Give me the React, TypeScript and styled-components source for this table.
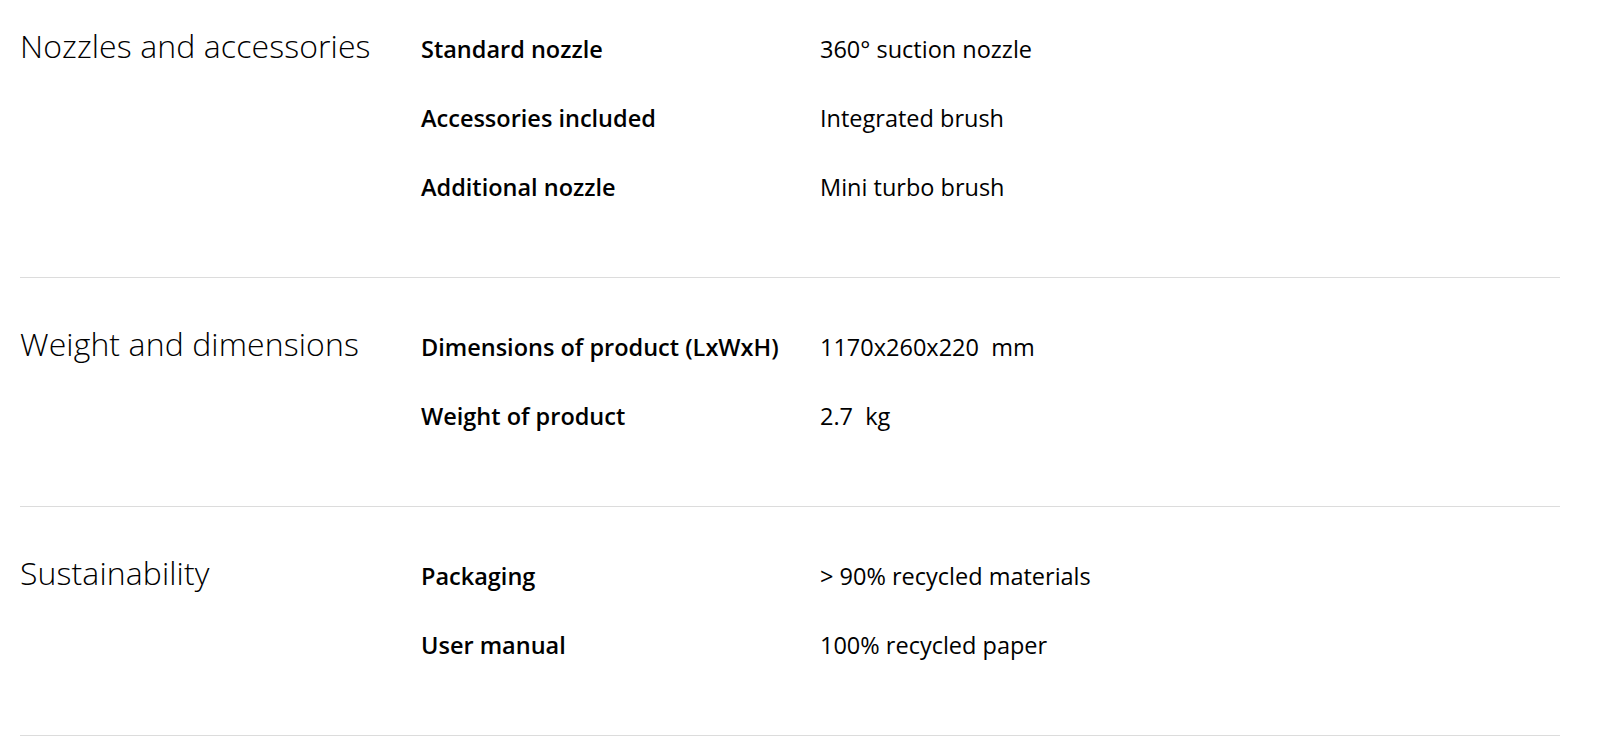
import React from "react";
import styled, { createGlobalStyle, css } from "styled-components";

interface Spec {
  label: string;
  value: string;
}

interface Group {
  title: string;
  specs: Spec[];
}

interface sectionProps {
  first?: boolean;
}

const groups: Group[] = [
  {
    title: "Nozzles and accessories",
    specs: [
      { label: "Standard nozzle", value: "360° suction nozzle" },
      { label: "Accessories included", value: "Integrated brush" },
      { label: "Additional nozzle", value: "Mini turbo brush" },
    ],
  },
  {
    title: "Weight and dimensions",
    specs: [
      { label: "Dimensions of product (LxWxH)", value: "1170x260x220  mm" },
      { label: "Weight of product", value: "2.7  kg" },
    ],
  },
  {
    title: "Sustainability",
    specs: [
      { label: "Packaging", value: "> 90% recycled materials" },
      { label: "User manual", value: "100% recycled paper" },
    ],
  },
];

const GlobalStyle = createGlobalStyle`
  body {
    margin: 0;
    background: #ffffff;
    color: #000000;
    font-family: "Open Sans", "Noto Sans", sans-serif;
  }
`;

const Page = styled.div`
  width: 1540px;
  padding: 0 40px 0 20px;
`;

const Section = styled.section`
  display: grid;
  grid-template-columns: 401px 1fr;
  align-items: baseline;
  padding: 35px 0 55px;
  border-bottom: 1px solid #dcdcdc;

  ${(props: sectionProps) =>
    props.first &&
    css`
      padding-top: 15px;
    `}
`;

const Title = styled.h2`
  margin: 0;
  font-size: 32px;
  font-weight: 300;
  line-height: 40px;
  letter-spacing: 0.1px;
  white-space: nowrap;
`;

const SpecList = styled.dl`
  margin: 0;
`;

const Row = styled.div`
  display: grid;
  grid-template-columns: 399px 1fr;
  padding: 18px 0;
  font-size: 23.5px;
  line-height: 33px;
`;

const Label = styled.dt`
  margin: 0;
  font-weight: 600;
`;

const Value = styled.dd`
  margin: 0;
  font-weight: 400;
  white-space: pre;
`;

function App() {
  return (
    <Page>
      <GlobalStyle />
      {groups.map((group, i) => (
        <Section key={group.title} first={i === 0}>
          <Title>{group.title}</Title>
          <SpecList>
            {group.specs.map((spec) => (
              <Row key={spec.label}>
                <Label>{spec.label}</Label>
                <Value>{spec.value}</Value>
              </Row>
            ))}
          </SpecList>
        </Section>
      ))}
    </Page>
  );
}

export default App;
